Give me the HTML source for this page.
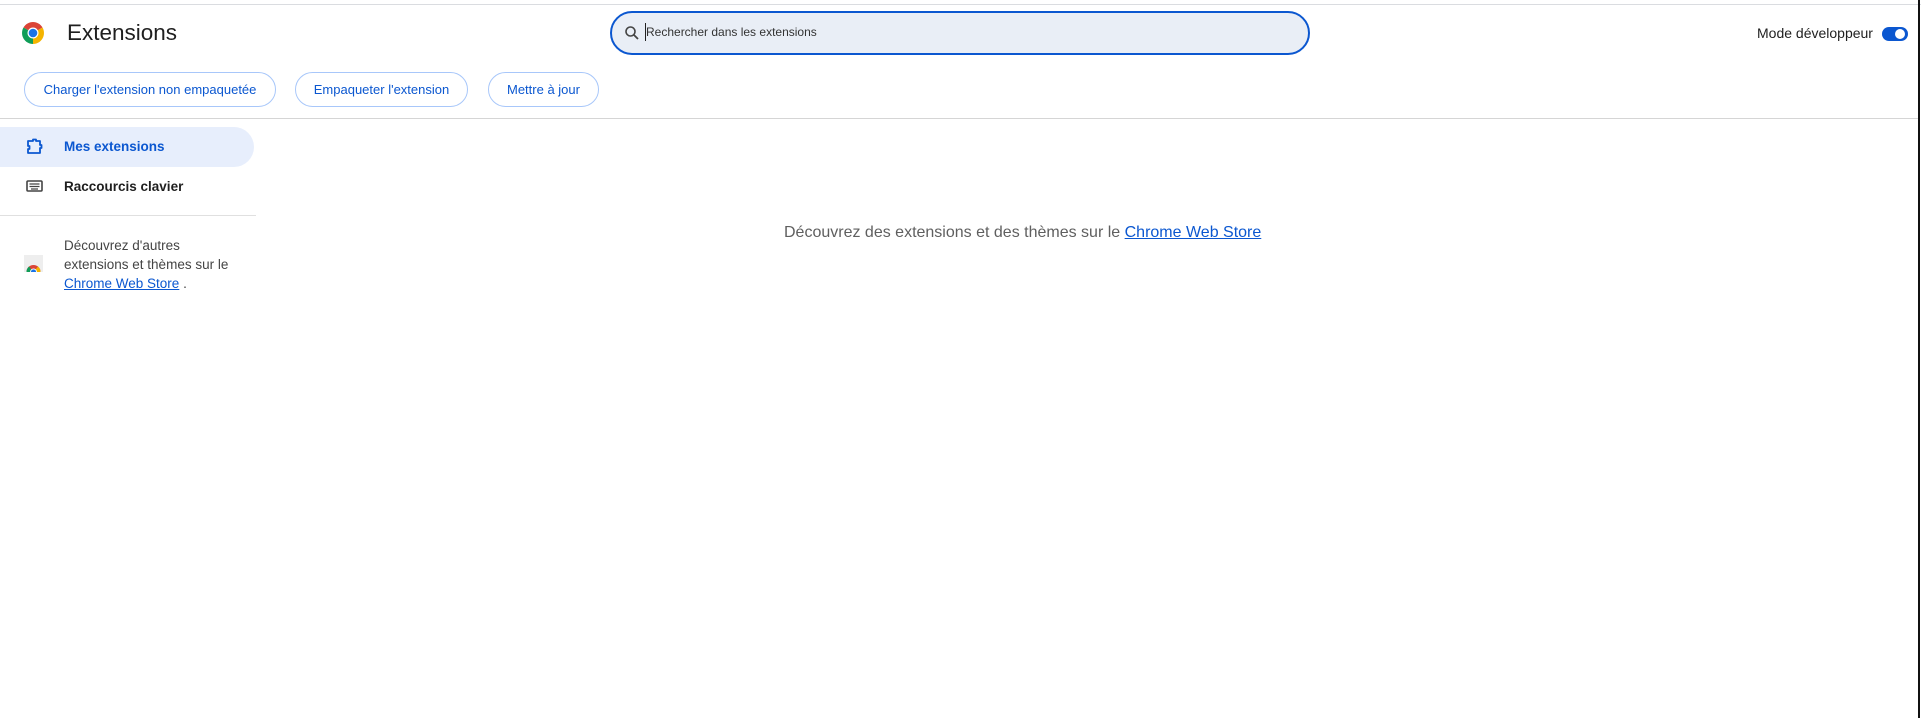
<!DOCTYPE html>
<html><head><meta charset="utf-8"><style>
*{box-sizing:border-box;margin:0;padding:0}
body{width:1921px;height:718px;background:#fff;font-family:"Liberation Sans",sans-serif;position:relative;overflow:hidden;color:#1f1f1f}
.abs{position:absolute}
.btn{position:absolute;top:72px;height:35px;border:1px solid #a8c7fa;border-radius:18px;color:#0b57d0;font-size:13px;line-height:33px;text-align:center}
</style></head><body>
<div class="abs" style="left:0;top:4px;width:1921px;height:1px;background:#dadce0"></div>
<div class="abs" style="left:1918px;top:0;width:2px;height:718px;background:#111"></div>
<svg class="abs" style="left:21px;top:21px" width="24" height="24" viewBox="0 0 24 24">
<path d="M12 12 L2.5 6.5 A11 11 0 0 1 21.5 6.5 Z" fill="#db4437"/>
<path d="M12 12 L21.5 6.5 A11 11 0 0 1 12 23 Z" fill="#f4b400"/>
<path d="M12 12 L12 23 A11 11 0 0 1 2.5 6.5 Z" fill="#0f9d58"/>
<circle cx="12" cy="12" r="5.5" fill="#fff"/><circle cx="12" cy="12" r="4.3" fill="#1a73e8"/></svg>
<div class="abs" style="left:67px;top:20px;font-size:22.5px;color:#1f1f1f">Extensions</div>
<div class="abs" style="left:610px;top:11px;width:700px;height:44px;border:2px solid #0b57d0;border-radius:22px;background:#e9eef6"></div>
<svg class="abs" style="left:624px;top:25px" width="16" height="16" viewBox="0 0 16 16"><circle cx="6.5" cy="6.5" r="4.5" fill="none" stroke="#444" stroke-width="1.6"/><path d="M10 10 L14 14" stroke="#444" stroke-width="1.8"/></svg>
<div class="abs" style="left:645px;top:23px;width:1px;height:18px;background:#222"></div>
<div class="abs" style="left:646px;top:25px;font-size:12px;color:#333">Rechercher dans les extensions</div>
<div class="abs" style="left:1757px;top:25px;font-size:14px;color:#1f1f1f">Mode développeur</div>
<div class="abs" style="left:1882px;top:27px;width:26px;height:14px;border-radius:7px;background:#0b57d0"></div>
<div class="abs" style="left:1895px;top:29px;width:10px;height:10px;border-radius:5px;background:#fff"></div>
<div class="btn" style="left:24px;width:252px">Charger l'extension non empaquetée</div>
<div class="btn" style="left:295px;width:173px">Empaqueter l'extension</div>
<div class="btn" style="left:488px;width:111px">Mettre à jour</div>
<div class="abs" style="left:0;top:118px;width:1918px;height:1px;background:#d5d5d5"></div>
<div class="abs" style="left:0;top:127px;width:254px;height:40px;background:#e7eefc;border-radius:0 20px 20px 0"></div>
<svg class="abs" style="left:25px;top:137px" width="20" height="20" viewBox="0 0 20 20"><path d="M3 4 H8 V2.5 H11 V4 H15 V8 H16.5 V11 H15 V16 H3 V12 H4.5 V9 H3 Z" fill="none" stroke="#0b57d0" stroke-width="1.8" stroke-linejoin="round"/></svg>
<div class="abs" style="left:64px;top:139px;font-size:13.5px;color:#0b57d0;font-weight:bold">Mes extensions</div>
<svg class="abs" style="left:26px;top:180px" width="17" height="13" viewBox="0 0 17 13"><rect x="1" y="1" width="15" height="10" rx="1" fill="none" stroke="#444" stroke-width="1.6"/><path d="M3.5 4h10M3.5 6.5h10M5 9h7" stroke="#444" stroke-width="1.2"/></svg>
<div class="abs" style="left:64px;top:179px;font-size:13.5px;color:#1f1f1f;font-weight:bold">Raccourcis clavier</div>
<div class="abs" style="left:0;top:215px;width:256px;height:1px;background:#e0e0e0"></div>
<div class="abs" style="left:24px;top:255px;width:19px;height:17px;background:#eee;overflow:hidden">
<svg width="19" height="17" viewBox="0 0 19 17"><circle cx="9.5" cy="17" r="7" fill="#db4437"/><path d="M9.5 17 L2.5 17 A7 7 0 0 1 5 11.5Z" fill="#0f9d58"/><path d="M9.5 17 L16.5 17 A7 7 0 0 0 14 11.5Z" fill="#f4b400"/><circle cx="9.5" cy="17" r="3.5" fill="#fff"/><circle cx="9.5" cy="17" r="2.6" fill="#1a73e8"/></svg></div>
<div class="abs" style="left:64px;top:236px;font-size:13.5px;line-height:19px;color:#444">Découvrez d'autres<br>extensions et thèmes sur le<br><span style="color:#0b57d0;text-decoration:underline">Chrome Web Store</span> .</div>
<div class="abs" style="left:784px;top:224px;font-size:16px;color:#5f5f5f;white-space:nowrap">Découvrez des extensions et des thèmes sur le <span style="color:#0b57d0;text-decoration:underline">Chrome Web Store</span></div>
</body></html>
